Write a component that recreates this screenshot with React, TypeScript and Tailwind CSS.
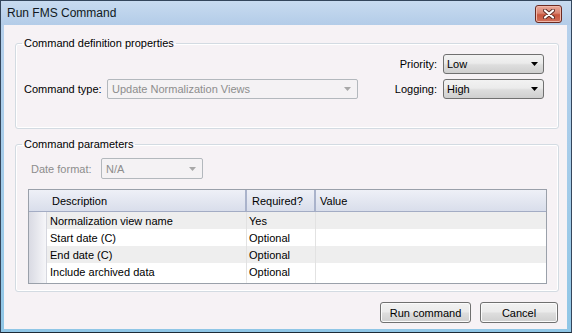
import React from "react";

// ── Data ──────────────────────────────────────────────────────────────────

const PARAMS = [
  { desc: "Normalization view name", req: "Yes" },
  { desc: "Start date (C)", req: "Optional" },
  { desc: "End date (C)", req: "Optional" },
  { desc: "Include archived data", req: "Optional" },
];

// ── Small pieces ──────────────────────────────────────────────────────────

function DropArrow({ disabled }: { disabled?: boolean }) {
  return (
    <svg width="7" height="4" viewBox="0 0 7 4" className="shrink-0">
      <polygon points="0,0 7,0 3.5,4" fill={disabled ? "#a8a8a8" : "#000"} />
    </svg>
  );
}

function Combo({
  value,
  className,
  disabled,
}: {
  value: string;
  className: string;
  disabled?: boolean;
}) {
  if (disabled) {
    return (
      <div
        className={`flex items-center justify-between pl-[4px] pr-[6px] rounded-[2px] border border-[#b3b8bd] bg-[#f4f2f4] text-[#8d8d8d] ${className}`}
      >
        <span>{value}</span>
        <DropArrow disabled />
      </div>
    );
  }
  return (
    <div
      className={`flex items-center justify-between pl-[3px] pr-[5px] rounded-[3px] border border-[#707070] bg-[linear-gradient(#f2f2f2_0%,#ebebeb_45%,#dddddd_55%,#cfcfcf_100%)] text-black ${className}`}
    >
      <span>{value}</span>
      <DropArrow />
    </div>
  );
}

function Button({ label, className }: { label: string; className: string }) {
  return (
    <div
      className={`flex items-center justify-center rounded-[3px] border border-[#707070] bg-[linear-gradient(#f2f2f2_0%,#ebebeb_45%,#dddddd_55%,#cfcfcf_100%)] shadow-[inset_0_0_0_1px_#fbfbfb] ${className}`}
    >
      {label}
    </div>
  );
}

function CloseButton() {
  return (
    <div className="w-[27px] h-[18px] mt-[2px] flex items-center justify-center rounded-[3px] border border-[#6b2a22] bg-[linear-gradient(#e9a99b_0%,#d98471_45%,#c7553d_55%,#d0705a_100%)] shadow-[inset_0_0_0_1px_#f0b8aa]">
      <svg width="12" height="10" viewBox="0 0 12 10">
        <path d="M2 1.5 L10 8.5 M10 1.5 L2 8.5" stroke="#5a2a24" strokeWidth="4" strokeLinecap="round" />
        <path d="M2 1.5 L10 8.5 M10 1.5 L2 8.5" stroke="#ffffff" strokeWidth="2.2" strokeLinecap="round" />
      </svg>
    </div>
  );
}

// ── Parameters grid ───────────────────────────────────────────────────────

function ParamGrid() {
  return (
    <div className="h-[95px] mt-[10px] ml-[12px] mr-[11px] border border-[#9aa0aa] bg-white flex flex-col">
      {/* Header */}
      <div className="h-[22px] flex border-b border-[#a3acc4] bg-linear-to-b from-[#eef0f7] to-[#d9deeb]">
        <div className="w-[18px]" />
        <div className="w-[200px] pl-[5px] flex items-center border-r-2 border-[#aab3cb]">Description</div>
        <div className="w-[69px] pl-[5px] flex items-center border-r-2 border-[#aab3cb]">Required?</div>
        <div className="flex-1 pl-[4px] flex items-center">Value</div>
      </div>

      {/* Rows */}
      <div className="flex-1 flex">
        <div className="w-[18px] border-r border-[#d6d7df] bg-linear-to-r from-[#d9dae3] to-[#f6f6f9]" />
        <div className="flex-1 flex flex-col">
          {PARAMS.map((p, i) => (
            <div
              key={p.desc}
              className={`h-[17px] flex ${i % 2 === 0 ? "bg-[#eeeeee]" : "bg-white"}`}
            >
              <div className="w-[200px] pl-[3px] flex items-center border-r border-[#e2e2e2]">{p.desc}</div>
              <div className="w-[69px] pl-[2px] flex items-center border-r border-[#e2e2e2]">{p.req}</div>
              <div className="flex-1" />
            </div>
          ))}
          <div className="flex-1 flex">
            <div className="w-[200px] border-r border-[#ececec]" />
            <div className="w-[69px] border-r border-[#ececec]" />
          </div>
        </div>
      </div>
    </div>
  );
}

// ── Dialog ────────────────────────────────────────────────────────────────

export default function App() {
  return (
    <div className="w-[572px] h-[333px] flex flex-col border border-[#34465c] border-b-[#1d2a36] bg-linear-to-b from-[#b9d1ec] to-[#8fc6e6] text-[11px] leading-[14px] text-black font-['Liberation_Sans',Arial,sans-serif]">
      {/* Title bar */}
      <div className="h-[24px] shrink-0 flex items-center justify-between pl-[6px] pr-[9px] bg-linear-to-b from-[#c8dbf0] to-[#b3cce8]">
        <span className="text-[12px] text-[#101820]">Run FMS Command</span>
        <CloseButton />
      </div>

      {/* Client area */}
      <div className="flex-1 ml-[3px] mr-[4px] mb-[3px] bg-[#f6f2f5] flex flex-col pl-[11px] pr-[8px] pt-[11px]">
        {/* Command definition properties */}
        <fieldset className="border border-[#d3dbe2] rounded-[3px] shadow-[inset_0_0_0_1px_#ffffff]">
          <legend className="ml-[6px] px-[2px] leading-[14px]">Command definition properties</legend>
          <div className="flex items-end justify-between pt-[4px] pb-[29px] pl-[8px] pr-[14px]">
            <div className="flex items-center">
              <span className="w-[83px]">Command type:</span>
              <Combo value="Update Normalization Views" className="w-[251px] h-[20px]" disabled />
            </div>
            <div className="grid grid-cols-[auto_101px] gap-x-[6px] gap-y-[5px] items-center">
              <span className="text-right">Priority:</span>
              <Combo value="Low" className="h-[20px]" />
              <span className="text-right">Logging:</span>
              <Combo value="High" className="h-[20px]" />
            </div>
          </div>
        </fieldset>

        {/* Command parameters */}
        <fieldset className="mt-[8px] border border-[#d3dbe2] rounded-[3px] shadow-[inset_0_0_0_1px_#ffffff] pb-[7px]">
          <legend className="ml-[6px] px-[2px] leading-[14px]">Command parameters</legend>
          <div className="flex items-center pt-[7px] pl-[15px]">
            <span className="w-[70px] text-[#8d8d8d]">Date format:</span>
            <Combo value="N/A" className="w-[102px] h-[21px]" disabled />
          </div>
          <ParamGrid />
        </fieldset>

        {/* Buttons */}
        <div className="flex justify-end gap-[9px] mt-[10px] mr-[1px]">
          <Button label="Run command" className="w-[91px] h-[21px]" />
          <Button label="Cancel" className="w-[78px] h-[21px]" />
        </div>
      </div>
    </div>
  );
}
